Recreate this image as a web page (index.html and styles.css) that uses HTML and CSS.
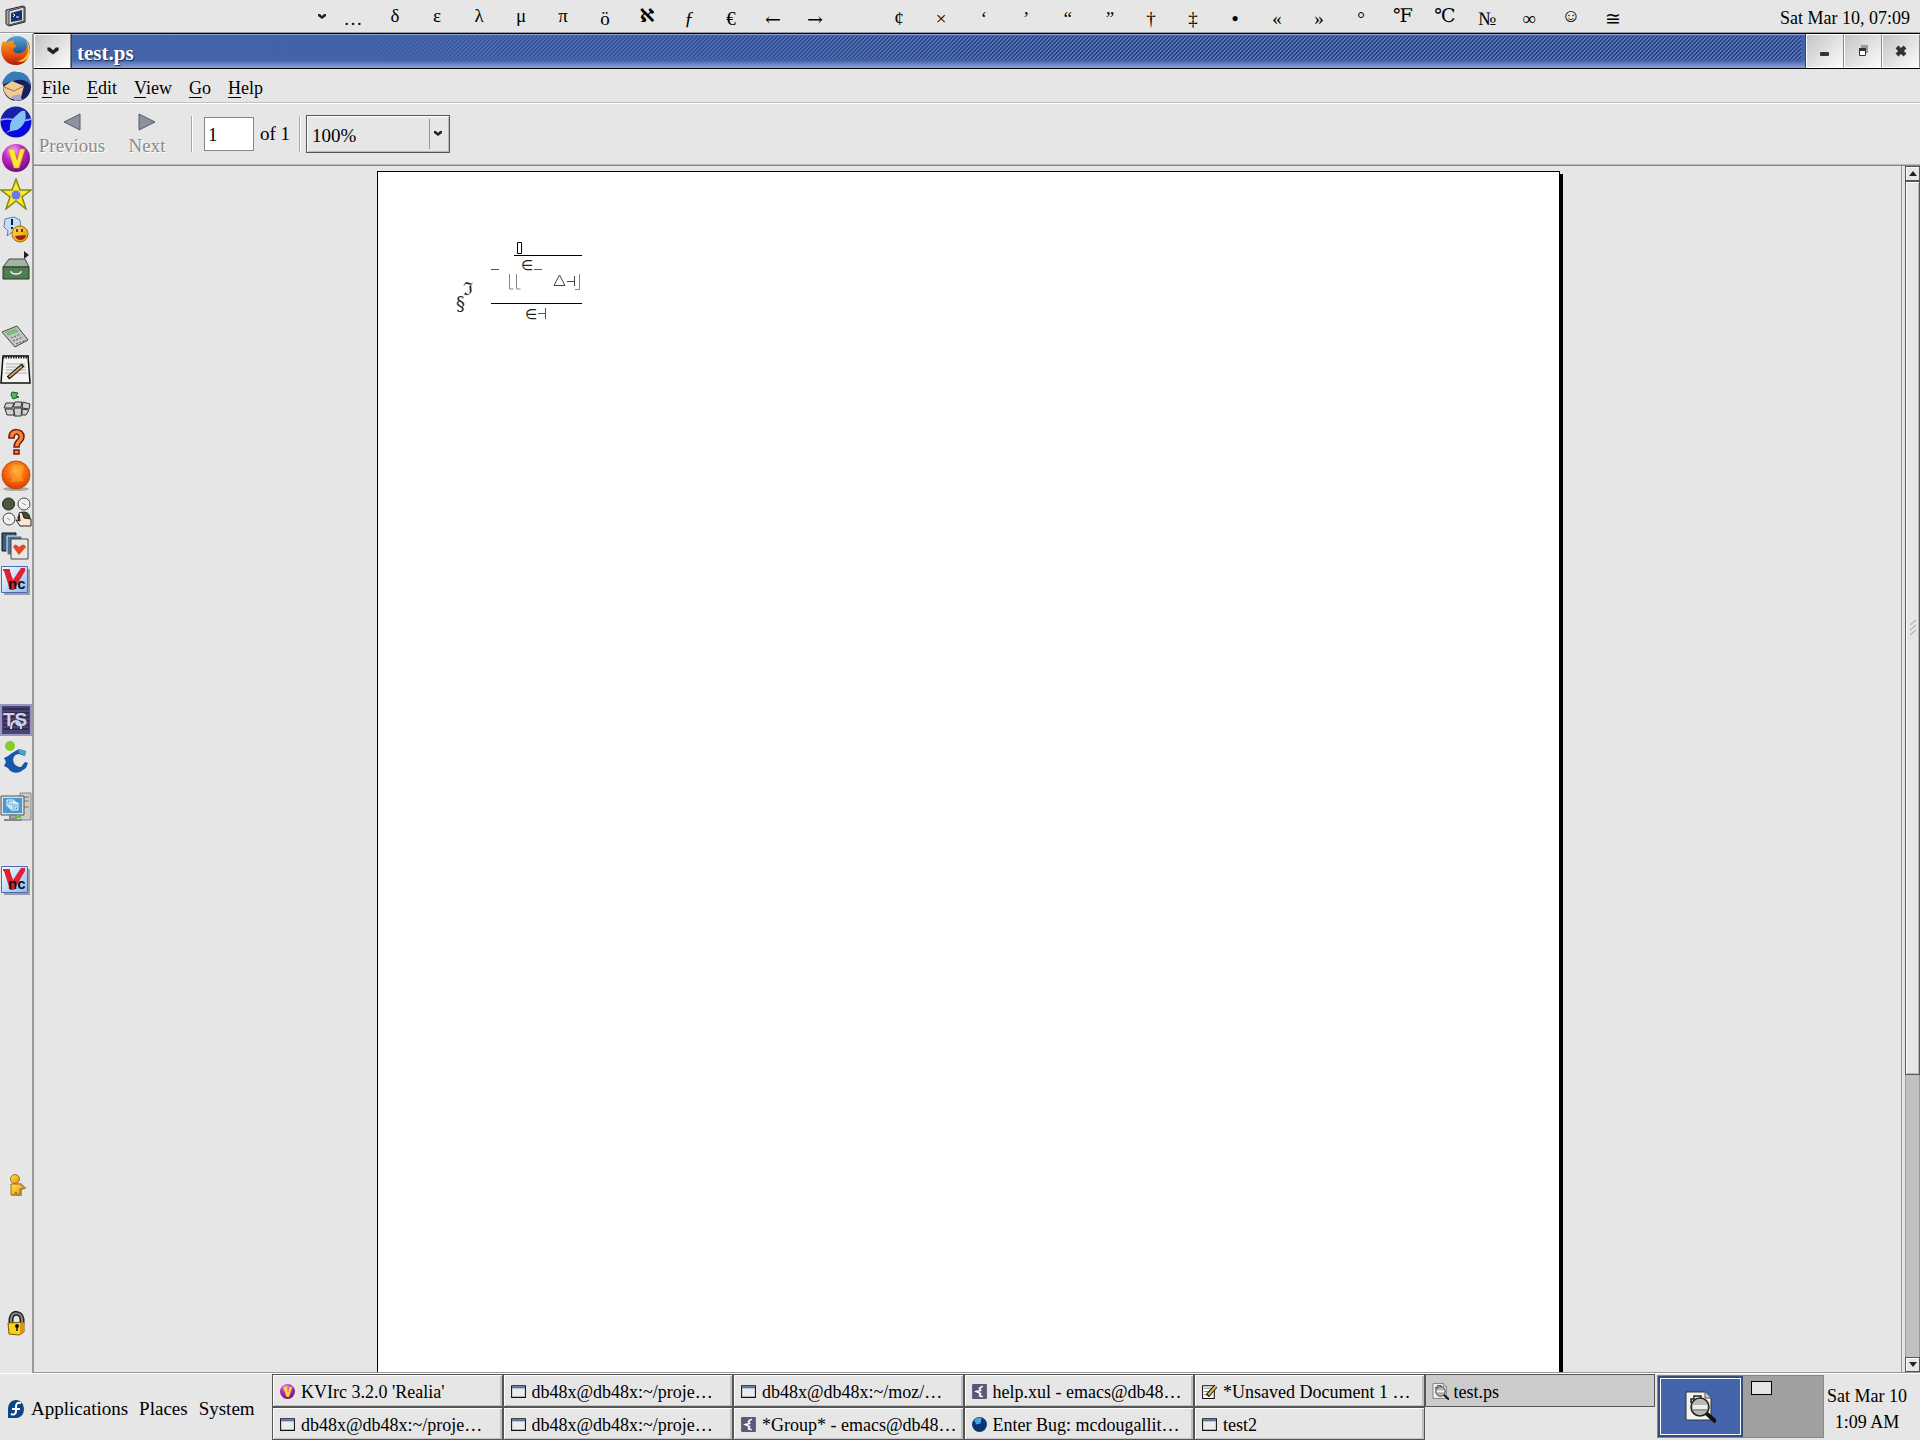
FILE: index.html
```html
<!DOCTYPE html>
<html lang="en">
<head>
  <meta charset="utf-8">
  <title>test.ps</title>
  <link rel="stylesheet" href="styles.css">
</head>
<body>
  <!-- shared icons -->
  <svg class="defs" width="0" height="0">
    <defs>
      <linearGradient id="gBlue" x1="0" y1="0" x2="0" y2="1"><stop offset="0" stop-color="#54a8dc"/><stop offset="1" stop-color="#0a2a66"/></linearGradient>
      <linearGradient id="gFox" x1="0" y1="0" x2="0" y2="1"><stop offset="0" stop-color="#f7a01c"/><stop offset=".6" stop-color="#e8500c"/><stop offset="1" stop-color="#b01c08"/></linearGradient>
      <radialGradient id="gKv" cx=".4" cy=".25" r=".8"><stop offset="0" stop-color="#f4b4f4"/><stop offset=".4" stop-color="#c42cc8"/><stop offset="1" stop-color="#6a0a78"/></radialGradient>
      <radialGradient id="gOrb" cx=".5" cy=".35" r=".7"><stop offset="0" stop-color="#ffb848"/><stop offset=".5" stop-color="#fa6a10"/><stop offset="1" stop-color="#c83c00"/></radialGradient>
      <linearGradient id="gGold" x1="0" y1="0" x2="1" y2="1"><stop offset="0" stop-color="#ffe060"/><stop offset="1" stop-color="#e89000"/></linearGradient>
      <linearGradient id="gVnc" x1="0" y1="0" x2="1" y2="1"><stop offset="0" stop-color="#fff"/><stop offset="1" stop-color="#8cb8f4"/></linearGradient>
    </defs>
    <symbol id="caret" viewBox="0 0 10 7"><path d="M1 1h2l2 2 2-2h2v2L5 6 1 3z" fill="#222"/></symbol>
    <symbol id="kvirc" viewBox="0 0 32 32">
      <circle cx="16" cy="16" r="14" fill="url(#gKv)"/>
      <path d="M8 7h6l3 11 3-11h5l-6 19h-5z" fill="#ffe43c" stroke="#c88a10" stroke-width=".6"/>
    </symbol>
    <symbol id="vnc" viewBox="0 0 32 32">
      <path d="M4 4h26v26H4z" fill="#9a9aa4"/>
      <path d="M1.500 1.500h26v26h-26z" fill="url(#gVnc)" stroke="#4a6cb4"/>
      <path d="M3 4h7v2l3 9 8-12h4v3L14 25h-4L4 6H3z" fill="#e02030"/>
    </symbol>
    <symbol id="term" viewBox="0 0 16 16"><path d="M1.500 2.500h13v11h-13z" fill="#ececec" stroke="#111"/><path d="M2 3h12v2H2z" fill="#5474a4"/></symbol>
    <symbol id="emacs" viewBox="0 0 16 16"><rect x="1" y="1" width="14" height="14" rx="1" fill="#5c5878"/><path d="M11 3L8 5l1 2-4 1 4 2-1 2 3 1" fill="none" stroke="#fff" stroke-width="1.500"/></symbol>
    <symbol id="viewer" viewBox="0 0 32 32">
      <path d="M2 1h19l6 6v22H2z" fill="#f2f2f0" stroke="#333"/><path d="M21 1v6h6" fill="#d0d0d0" stroke="#555"/>
      <path d="M7 12V8h3V5h7v3" fill="none" stroke="#222" stroke-width="1.500"/>
      <path d="M22 22l10 9" stroke="#111" stroke-width="4"/>
      <circle cx="16" cy="16" r="9" fill="#b8b8b4" stroke="#222" stroke-width="1.500"/>
      <path d="M9 14h14v4H9z" fill="#eee"/><path d="M9 19h14" stroke="#777"/>
    </symbol>
  </svg>

  <header class="top-panel">
    <a class="terminal" href="#" aria-label="Terminal">
      <svg width="22" height="22" viewBox="0 0 22 22"><path d="M1 5L18 1l2 1v15L4 21l-3-2z" fill="#aaa" stroke="#222"/><path d="M4 6l15-4v14L4 20z" fill="#ddd" stroke="#444"/><path d="M6 8l11-3v10L6 17z" fill="#123468"/><path d="M8 9l2 1-2 2M11 12h3" fill="none" stroke="#fff"/></svg>
    </a>
    <button class="palette-menu" aria-label="Palettes"><svg width="10" height="7"><use href="#caret"/></svg></button>
    <div class="palette">
      <button class="low">…</button><button class="up">δ</button><button class="up">ε</button><button class="up">λ</button><button class="up">μ</button><button class="up">π</button><button>ö</button><button class="up heavy">ℵ</button><button><i>ƒ</i></button><button>€</button><button class="arrow">←</button><button class="arrow">→</button><button aria-label="No-break space">&nbsp;</button><button>¢</button><button>×</button><button><i>‘</i></button><button><i>’</i></button><button><i>“</i></button><button><i>”</i></button><button>†</button><button>‡</button><button class="heavy">•</button><button>«</button><button>»</button><button>°</button><button class="up">℉</button><button class="up">℃</button><button>№</button><button>∞</button><button class="up">☺</button><button>≅</button>
    </div>
    <time class="top-clock">Sat Mar 10, 07:09</time>
  </header>

  <nav class="launchers">
    <div class="group">
      <a href="#" aria-label="Firefox"><svg viewBox="0 0 32 32"><circle cx="17" cy="15" r="13" fill="url(#gBlue)"/><path d="M3 7l3 2c2-2 5-3 8-2-1 2 0 4 3 5l-4 3c0 4 6 6 10 3 4-2 5-7 3-12 7 8 4 25-10 25C3 31-2 17 3 7z" fill="url(#gFox)"/><path d="M26 7c5 9 1 19-9 20 9 4 18-9 9-20z" fill="#ffc83c"/></svg></a>
      <a href="#" aria-label="Thunderbird"><svg viewBox="0 0 32 32"><circle cx="17" cy="17" r="14" fill="#16205e"/><path d="M2 14C4 5 12 0 17 2c7-1 14 5 13 13-4-6-10-6-17-4C8 12 5 15 2 14z" fill="#357cb4"/><path d="M3 17l9-6 12 5-3 11-9 2c-5-2-8-6-9-12z" fill="#f0cc94"/><path d="M4 17l10 4 10-5" fill="none" stroke="#9a7040"/><path d="M11 26l9-2 2 6-7 1z" fill="#a8a8cc"/></svg></a>
      <a href="#" aria-label="SeaMonkey"><svg viewBox="0 0 32 32"><circle cx="16" cy="16" r="15.500" fill="#1820a8"/><path d="M1 13c10-2 20 2 30 0v5c-4 17-27 17-30 0z" fill="#0808e0"/><path d="M1 14c10-4 20 4 30-1" fill="none" stroke="#8cb8ff" stroke-width="1.500"/><path d="M1 30l9-6c-1-8 3-12 8-16 2-2 4-4 7-3 2 7 0 15-8 19-5 1-9 1-16 6z" fill="#84c0f4"/></svg></a>
      <a href="#" aria-label="KVIrc"><svg viewBox="0 0 32 32"><use href="#kvirc"/></svg></a>
      <a href="#" aria-label="Starred"><svg viewBox="0 0 32 32"><path d="M16 1l4 11h11l-9 7 4 12-10-8-10 8 4-12-9-7h11z" fill="#f8ec20" stroke="#86861a" stroke-width="1.500"/><circle cx="16" cy="17" r="4.500" fill="#6878f4"/></svg></a>
      <a href="#" aria-label="Chat"><svg viewBox="0 0 32 32"><path d="M5 5l9-2 6 3 1 8-5 5-4-1-5 4 1-5-4-4z" fill="#c8dcf4" stroke="#6484a0"/><path d="M12 5v6M12 13v2" stroke="#123" stroke-width="2"/><circle cx="20" cy="20" r="8" fill="url(#gGold)" stroke="#a86c08"/><path d="M15 22l11-1c-1 6-9 7-11 1z" fill="#9a2010"/><path d="M17 15v3M22 15v3" stroke="#222" stroke-width="1.500"/></svg></a>
      <a href="#" aria-label="Drawer"><svg viewBox="0 0 32 32"><path d="M24 1l5 4-5 4z" fill="#222"/><path d="M3 17L9 9h16l4 8z" fill="#a4b4a4" stroke="#444"/><path d="M3 17h26v12H3z" fill="#507c50" stroke="#203820"/><path d="M11 21q0 3 5 3t5-3" fill="none" stroke="#eee" stroke-width="1.500"/></svg></a>
    </div>
    <div class="group tight">
      <a href="#" aria-label="Calculator"><svg viewBox="0 0 32 32"><path d="M2 12l15-6 11 14-13 7z" fill="#c4c8c0" stroke="#444"/><path d="M5 12l11-4 3 4-11 4z" fill="#7cbc84"/><path d="M11 18l10-4M13 21l10-4M16 24l10-4" stroke="#555" stroke-dasharray="2 1.500"/></svg></a>
      <a href="#" aria-label="Text Editor"><svg viewBox="0 0 32 32"><path d="M3 1h25l2 27H1z" fill="#f4f4f2" stroke="#111" stroke-width="1.500"/><path d="M3 2h26" stroke="#222" stroke-width="3" stroke-dasharray="1.500 1"/><path d="M6 9h19M6 12h20M6 15h20M5 18h22" stroke="#aaa"/><path d="M8 23l15-13" stroke="#111" stroke-width="4"/><path d="M9 22l13-11" stroke="#d8a858" stroke-width="2"/></svg></a>
      <a href="#" aria-label="Keyboard"><svg viewBox="0 0 32 32"><path d="M12 2l6 1-2 3 3 1-6 2-2-4z" fill="#50b858" stroke="#205c28"/><path d="M6 13h8l-2 5H4zM15 12h7l-1 5h-8zM23 12l7 2-1 5-7-1zM5 19h8l2 6H7zM14 18h8l-1 8h-7zM22 19l7 1-3 5h-4z" fill="#d0d0d0" stroke="#333"/></svg></a>
      <a href="#" aria-label="Help"><svg viewBox="0 0 32 32"><path d="M9 13C8 1 25 3 24 12c0 5-5 5-5 10h-5c0-7 5-7 5-10 0-4-5-4-5 1zM14 25h5v4h-5z" fill="#f88838" stroke="#7a1808" stroke-width="1.500"/></svg></a>
      <a href="#" aria-label="Globe"><svg viewBox="0 0 32 32"><ellipse cx="16" cy="29" rx="13" ry="2" fill="#aaa"/><circle cx="16" cy="15" r="14" fill="url(#gOrb)" stroke="#c04c08"/><path d="M12 6q6-2 12 0l-3 10 3 5-13 1 1-5 5-2z" fill="#ffb020" opacity=".5"/></svg></a>
      <a href="#" aria-label="Othello"><svg viewBox="0 0 32 32"><circle cx="8.500" cy="9" r="6" fill="#4c5838" stroke="#222"/><circle cx="24" cy="9" r="6" fill="#f0f0f0" stroke="#444"/><circle cx="9" cy="24" r="6" fill="#f0f0f0" stroke="#444"/><circle cx="24" cy="23" r="6" fill="#405030" stroke="#222"/><path d="M7 23l3 2M22 8l4 2" stroke="#999"/><path d="M19 18l3-1 2 6 7 1v7H20l-4-6 4 1z" fill="#ffe4d0" stroke="#222"/></svg></a>
      <a href="#" aria-label="Cards"><svg viewBox="0 0 32 32"><path d="M2 3h14v18H2z" fill="#385c84" stroke="#111"/><path d="M7 6h15v19H7z" fill="#48709c" stroke="#eee"/><path d="M11 9h17v20H11z" fill="#e8e8e4" stroke="#444"/><path d="M19 25l-6-8q2-5 6 0 5-5 7 0z" fill="#e04828"/></svg></a>
      <a href="#" aria-label="VNC Viewer"><svg viewBox="0 0 32 32"><use href="#vnc"/><text x="8" y="24" class="nc">nc</text></svg></a>
    </div>
    <div class="group chat">
      <a href="#" aria-label="TeamSpeak"><svg viewBox="0 0 32 32"><path d="M1 1h30v30H1z" fill="#48446c" stroke="#9894c8" stroke-width="2"/><path d="M3 5h26M3 9h26M3 13h26M3 17h26M3 21h26M3 25h26" stroke="#181438"/><text x="3" y="22" class="ts">TS</text><path d="M11 25q0-8 5-8t5 8" fill="none" stroke="#d0d0ec" stroke-width="2"/></svg></a>
      <a href="#" aria-label="Cellular"><svg viewBox="0 0 32 32"><circle cx="10" cy="5" r="5" fill="#84cc28"/><path d="M12 12l7-4 7 2-1 5-6-2c-8 0-8 13 2 13l4-5 3 1-2 5-6 4c-5 2-10 0-12-4l-4-2 2-4-2-4 4-2z" fill="#1458a8"/><path d="M18 8l8 2-1 5-6-3z" fill="#48a4cc"/></svg></a>
    </div>
    <div class="group remote">
      <a href="#" aria-label="Remote Desktop"><svg viewBox="0 0 32 32"><path d="M20 1h11v27H20z" fill="#ccc" stroke="#888"/><path d="M23 5h6M23 9h6M23 15h6" stroke="#777"/><path d="M1 4h23v19H1z" fill="#ddd" stroke="#555"/><path d="M3 6h19v15H3z" fill="#4898d4"/><path d="M7 8h7v6H7zM11 11h7v7h-7zM9 10h7v6H9z" fill="none" stroke="#fff"/><path d="M10 23h6v4H10zM4 28h18" fill="#aaa" stroke="#888" stroke-width="2"/><path d="M15 25h6" stroke="#5cc828" stroke-width="2"/></svg></a>
    </div>
    <div class="group server">
      <a href="#" aria-label="VNC Server"><svg viewBox="0 0 32 32"><use href="#vnc"/><text x="8" y="24" class="nc">nc</text></svg></a>
    </div>
    <div class="group buddy">
      <a href="#" aria-label="Buddy status"><svg viewBox="0 0 32 32"><path d="M13 14l8-1 4 4 2 1-5 2v6H12z" fill="#999"/><circle cx="15" cy="9" r="4.500" fill="url(#gGold)" stroke="#a87010"/><path d="M11 14h9l5 4-5 1v6h-3l-1-3-2 3h-3z" fill="url(#gGold)" stroke="#a86c08"/></svg></a>
    </div>
    <div class="group lock">
      <a href="#" aria-label="Lock"><svg viewBox="0 0 32 32"><path d="M11 18v-6c1-8 10-7 11 0v4" fill="none" stroke="#222" stroke-width="5"/><path d="M11 18v-6c1-8 10-7 11 0v4" fill="none" stroke="#888" stroke-width="2"/><path d="M8 16l16-1v10l-5 3-10-1z" fill="#f8d020" stroke="#7a5808"/><path d="M20 16h4v9l-4 2z" fill="#d89808"/><circle cx="17" cy="19" r="2" fill="#111"/><path d="M17 19v5" stroke="#111" stroke-width="1.500"/></svg></a>
    </div>
  </nav>

  <main class="window">
    <div class="titlebar">
      <button class="win-btn" aria-label="Window menu"><svg width="14" height="10"><use href="#caret"/></svg></button>
      <h1>test.ps</h1>
      <button class="win-btn" aria-label="Minimize"><svg width="14" height="14"><rect x="2" y="8" width="9" height="4" rx="1" fill="#333"/></svg></button>
      <button class="win-btn" aria-label="Restore"><svg width="14" height="14"><path d="M5 1h7v8h-2V4H5z" fill="#999"/><path d="M3.500 5.500h6v6h-6z" fill="#fff" stroke="#333"/><path d="M3 4h7v3H3z" fill="#333"/></svg></button>
      <button class="win-btn" aria-label="Close"><svg width="14" height="14"><path d="M3 3l8 8M11 3l-8 8" stroke="#333" stroke-width="4"/></svg></button>
    </div>

    <nav class="menubar">
      <button><u>F</u>ile</button>
      <button><u>E</u>dit</button>
      <button><u>V</u>iew</button>
      <button><u>G</u>o</button>
      <button><u>H</u>elp</button>
    </nav>

    <div class="toolbar">
      <button class="nav-btn" disabled><svg width="18" height="18"><path d="M17 1v16L1 9z" fill="#8c929c" stroke="#555c68"/></svg>Previous</button>
      <button class="nav-btn next" disabled><svg width="18" height="18"><path d="M1 1v16l16-8z" fill="#8c929c" stroke="#555c68"/></svg>Next</button>
      <span class="sep"></span>
      <label class="page-no"><input type="text" value="1" aria-label="Page"> of 1</label>
      <span class="sep"></span>
      <div class="zoom">
        <select aria-label="Zoom"><option>100%</option></select>
        <svg width="10" height="7"><use href="#caret"/></svg>
      </div>
    </div>

    <div class="view">
      <div class="canvas">
        <div class="page">
          <svg class="formula" width="150" height="100" fill="#222">
            <path d="M67.500 7.500h4v11h-4z" fill="none" stroke="#000"/>
            <path d="M64 20.500h68M41 68.500h91" stroke="#000"/>
            <path d="M41 34.500h8M84 34.500h8" stroke="#555"/>
            <path d="M59.500 39v15h4M66.500 39v15h4M125 54.500h4.500V39" fill="none" stroke="#888"/>
            <path d="M104 50.500h11L109.500 40zM117 46.500h7M124.500 41v10" fill="none" stroke="#444"/>
            <text x="71" y="35">∈</text>
            <text x="75" y="84">∈</text>
            <path d="M88 78.500h7M95.500 73v11" stroke="#555"/>
            <text x="13" y="60" class="big">ℑ</text>
            <text x="6" y="75" class="big">§</text>
          </svg>
        </div>
      </div>
      <div class="scrollbar">
        <button aria-label="Scroll up"><svg width="8" height="6"><path d="M4 0l4 5H0z" fill="#222"/></svg></button>
        <div class="trough"><div class="thumb"><svg width="8" height="18"><path d="M1 6l6-5M1 11l6-5M1 16l6-5" stroke="#999"/></svg></div></div>
        <button aria-label="Scroll down"><svg width="8" height="6"><path d="M4 5l4-5H0z" fill="#222"/></svg></button>
      </div>
    </div>
  </main>

  <footer class="bottom-panel">
    <nav class="main-menu">
      <svg width="18" height="20" viewBox="0 0 18 20"><path d="M9 1c10 0 11 18 0 18H1V10c0-5 3-9 8-9z" fill="#0c4484"/><path d="M14 4c-4-1-5 1-5 4v4c0 4-3 4-5 3M5 10h8" fill="none" stroke="#fff" stroke-width="2"/></svg>
      <button>Applications</button>
      <button>Places</button>
      <button>System</button>
    </nav>
    <div class="tasks">
      <button><svg><use href="#kvirc"/></svg><span>KVIrc 3.2.0 'Realia'</span></button>
      <button><svg><use href="#term"/></svg><span>db48x@db48x:~/proje…</span></button>
      <button><svg><use href="#term"/></svg><span>db48x@db48x:~/moz/…</span></button>
      <button><svg><use href="#emacs"/></svg><span>help.xul - emacs@db48…</span></button>
      <button><svg viewBox="0 0 16 16"><path d="M1.500 2.500h11v12h-11z" fill="#fff" stroke="#111"/><path d="M3 5h8M3 8h7M3 11h7" stroke="#888"/><path d="M6 12l8-9" stroke="#222" stroke-width="4"/><path d="M7 11l7-8" stroke="#e8b850" stroke-width="2"/></svg><span>*Unsaved Document 1 …</span></button>
      <button class="active"><svg><use href="#viewer"/></svg><span>test.ps</span></button>
      <button><svg><use href="#term"/></svg><span>db48x@db48x:~/proje…</span></button>
      <button><svg><use href="#term"/></svg><span>db48x@db48x:~/proje…</span></button>
      <button><svg><use href="#emacs"/></svg><span>*Group* - emacs@db48…</span></button>
      <button><svg viewBox="0 0 16 16"><circle cx="8" cy="8" r="7" fill="#0c3474"/><path d="M3 4q3-4 7-2l-1 5-4 1z" fill="#48a8dc"/></svg><span>Enter Bug: mcdougallit…</span></button>
      <button><svg><use href="#term"/></svg><span>test2</span></button>
    </div>
    <div class="pager">
      <button class="desk current" aria-label="Workspace 1"><svg width="32" height="32"><use href="#viewer"/></svg></button>
      <button class="desk" aria-label="Workspace 2"><i></i></button>
    </div>
    <time class="clock">Sat Mar 10<br>1:09 AM</time>
  </footer>
</body>
</html>
```
FILE: styles.css
```css
* { box-sizing: border-box; }
body {
  margin: 0;
  height: 100vh;
  display: grid;
  grid-template: 33px minmax(0, 1fr) 67px / 34px minmax(0, 1fr);
  background: #e6e6e6;
  color: #000;
  font: 19px/24px "Liberation Serif", "DejaVu Serif", "DejaVu Sans", serif;
  overflow: hidden;
}
button, input, select { font: inherit; color: inherit; background: none; border: 0; padding: 0; margin: 0; border-radius: 0; }
svg { display: block; flex: none; }
.defs { position: absolute; }
.nc { font: bold 15px "Liberation Sans", sans-serif; fill: #111; }
.ts { font: bold 19px "Liberation Sans", sans-serif; fill: #d0d0ec; }

/* top panel */
.top-panel { grid-column: 1 / 3; display: flex; align-items: center; border-bottom: 1px solid #999; padding-right: 10px; }
.terminal { width: 311px; padding-left: 5px; }
.palette-menu { width: 21px; display: flex; justify-content: center; }
.palette { display: flex; }
.palette button { width: 42px; height: 32px; line-height: 32px; padding-top: 3px; }
.palette .up { padding: 0 0 3px; }
.palette .heavy { font-weight: bold; }
.palette .arrow { font-family: "DejaVu Serif", serif; }
.top-clock { margin-left: auto; padding-top: 3px; font-size: 18px; }

/* left panel */
.launchers { border-right: 2px solid #999; border-top: 1px solid #fff; overflow: hidden; }
.group { display: flex; flex-direction: column; gap: 4px; }
.group a, .group svg { display: block; width: 32px; height: 32px; }
.tight { gap: 3px; margin-top: 38px; }
.chat { gap: 5px; margin-top: 107px; }
.remote { margin-top: 19px; }
.server { margin-top: 41px; }
.buddy { margin-top: 273px; }
.lock { margin-top: 105px; }

/* window */
.window { display: flex; flex-direction: column; min-width: 0; border-bottom: 1px solid #999; }
.titlebar { display: flex; height: 36px; border-top: 1px solid #000; border-bottom: 1px solid #000; background: #4464ac; }
.titlebar h1 {
  flex: 1;
  position: relative;
  margin: 0;
  padding: 2px 5px 0;
  border: 1px solid #2c4480;
  border-width: 0 1px;
  background: linear-gradient(#8ca4dc 0 1px, #4464ac 1px 26px, #8ca4dc);
  color: #fff;
  font-size: 21px;
  line-height: 34px;
  text-shadow: 1px 1px 1px #1c2c5c;
}
.titlebar h1::after {
  content: "";
  position: absolute;
  inset: 2px 4px 4px 80px;
  background: linear-gradient(135deg, #2a4280 25%, #5474bc 25% 50%, #2a4280 50% 75%, #5474bc 75%) 0 0 / 4px 4px;
  mask-image: linear-gradient(90deg, transparent, #000 900px), linear-gradient(#000 70%, transparent);
  mask-composite: intersect;
}
.win-btn { display: flex; align-items: center; justify-content: center; width: 38px; background: linear-gradient(135deg, #c4c4c4, #fcfcfc); border: 1px solid #fff; border-right-color: #888; }
.titlebar .win-btn:first-child { width: 37px; }
.menubar { display: flex; gap: 17px; height: 34px; padding: 4px 8px 0; border-bottom: 1px solid #c0c0c0; font-size: 18px; }
.menubar u { text-underline-offset: 3px; }
.toolbar { display: flex; align-items: center; height: 62px; padding-left: 5px; border-top: 1px solid #fff; border-bottom: 1px solid #b8b8b8; }
.nav-btn { display: flex; flex-direction: column; align-items: center; gap: 3px; width: 66px; padding-top: 2px; color: #8c8c8c; text-shadow: 1px 1px #fff; }
.next { width: 60px; margin-left: 12px; margin-right: 14px; }
.sep { width: 2px; height: 36px; background: #a8a8a8; border-right: 1px solid #fff; }
.page-no { display: flex; align-items: center; gap: 6px; margin: 0 9px 0 11px; }
.page-no input { width: 50px; height: 34px; padding: 2px 3px 0; border: 1px solid #888; background: #fff; }
.zoom { position: relative; margin-left: 5px; }
.zoom select { appearance: none; display: block; width: 144px; height: 38px; padding: 3px 5px 0; border: 1px solid #555; box-shadow: inset 1px 1px #fff, inset -1px -1px #bbb; }
.zoom::after { content: ""; position: absolute; right: 20px; top: 4px; bottom: 4px; border-left: 1px solid #999; }
.zoom svg { position: absolute; right: 7px; top: 15px; pointer-events: none; }

/* document */
.view { flex: 1; min-height: 0; display: flex; border-top: 1px solid #888; }
.canvas { flex: 1; display: flex; justify-content: center; padding: 5px 0 0 2px; border-right: 1px solid #999; overflow: hidden; }
.page { width: 1183px; padding: 63px 72px; background: #fff; border: 1px solid #000; border-bottom: 0; box-shadow: 3px 3px #000; }
.formula { font-family: "DejaVu Sans", sans-serif; font-size: 14px; }
.formula .big { font-family: "DejaVu Serif", serif; font-size: 18px; }
.scrollbar { width: 15px; margin-left: 3px; display: flex; flex-direction: column; }
.scrollbar button { height: 15px; display: flex; align-items: center; justify-content: center; border: 1px solid #555; box-shadow: inset 1px 1px #fff; }
.trough { flex: 1; background: #c0c0c0; border: 1px solid #999; border-width: 0 1px; }
.thumb { height: 76%; margin: 0 -1px; display: flex; align-items: center; justify-content: center; background: #e6e6e6; border: 1px solid #555; box-shadow: inset 1px 1px #fff, inset -1px -1px #bbb; }

/* bottom panel */
.bottom-panel { grid-column: 1 / 3; display: flex; border-top: 1px solid #fff; }
.main-menu { width: 272px; display: flex; align-items: center; gap: 11px; padding: 4px 0 0 7px; }
.main-menu svg { margin-right: -5px; }
.tasks { flex: 1; display: grid; grid-template: repeat(2, 1fr) / repeat(6, minmax(0, 1fr)); }
.tasks button { display: flex; align-items: center; gap: 5px; min-width: 0; padding: 2px 5px 0 6px; border: 1px solid #555; box-shadow: inset 1px 1px #fff, inset -2px -1px #c0c0c0; font-size: 18px; white-space: nowrap; }
.tasks svg { width: 17px; height: 17px; }
.tasks span { overflow: hidden; text-overflow: ellipsis; }
.tasks .active { background: #cbcbcb; box-shadow: none; }
.pager { display: flex; width: 167px; margin: 1px 0 2px 2px; background: #a0a0a0; border: 1px solid #888; }
.desk { flex: 1; }
.desk i { display: block; width: 21px; height: 14px; margin: -26px 0 0 8px; background: #e6e6e6; border: 1px solid #000; }
.current { display: flex; align-items: center; justify-content: center; background: #4464ac; border: 2px solid #344c80; outline: 1px solid #fff; outline-offset: -3px; }
.clock { width: 96px; padding: 9px 10px 0 0; font-size: 18px; line-height: 26px; text-align: center; }
```
